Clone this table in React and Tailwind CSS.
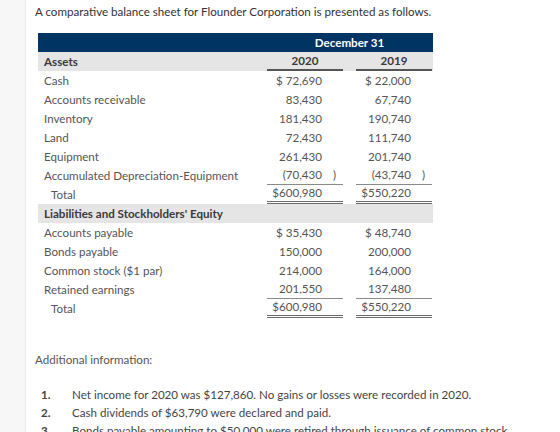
import React from "react";

const assets = [
  { label: "Cash", a: "$ 72,690", b: "$ 22,000" },
  { label: "Accounts receivable", a: "83,430", b: "67,740" },
  { label: "Inventory", a: "181,430", b: "190,740" },
  { label: "Land", a: "72,430", b: "111,740" },
  { label: "Equipment", a: "261,430", b: "201,740" },
  { label: "Accumulated Depreciation-Equipment", a: "(70,430", b: "(43,740", paren: true, rule: true },
];

const liabilities = [
  { label: "Accounts payable", a: "$ 35,430", b: "$ 48,740" },
  { label: "Bonds payable", a: "150,000", b: "200,000" },
  { label: "Common stock ($1 par)", a: "214,000", b: "164,000" },
  { label: "Retained earnings", a: "201,550", b: "137,480", rule: true },
];

function Num({ value, paren, rule, total }) {
  return (
    <div
      className={
        "relative flex h-full w-[76px] items-center justify-end pr-[7px] " +
        (rule ? "border-b border-[#8a8a8a] " : "") +
        (total ? "border-b-[3px] border-double border-[#6a6a6a]" : "")
      }
    >
      <span>{value}</span>
      <span className="w-[14px] text-right">{paren ? ")" : ""}</span>
    </div>
  );
}

function Row({ label, a, b, paren, rule, total, indent }) {
  return (
    <div className="flex h-[19px] items-center">
      <div className={"w-[229px] " + (indent ? "pl-[13px]" : "pl-[6px]")}>{label}</div>
      <Num value={a} paren={paren} rule={rule} total={total} />
      <div className="w-[13px]" />
      <Num value={b} paren={paren} rule={rule} total={total} />
    </div>
  );
}

export default function App() {
  return (
    <div
      className="flex min-h-[432px] w-[560px] bg-white text-[11.6px] text-[#555]"
      style={{ fontFamily: "Lato, 'Open Sans', sans-serif" }}
    >
      <div className="w-[26px] shrink-0 border-r border-[#ececec] bg-[#f7f7f7]" />
      <div className="flex-1 pl-[9px] pt-[3px]">
        <p className="leading-[17px] text-[#333]">
          A comparative balance sheet for Flounder Corporation is presented as follows.
        </p>

        <div className="ml-[3px] mt-[13px] w-[395px]">
          <div className="flex h-[19px] items-center bg-[#003463] font-bold text-white">
            <div className="w-[229px]" />
            <div className="w-[165px] text-center">December 31</div>
          </div>
          <div className="flex h-[19px] items-center bg-[#e5e5e5] font-bold text-[#3a3a3a]">
            <div className="w-[229px] pl-[6px]">Assets</div>
            <div className="flex h-full w-[76px] items-center justify-center border-b-2 border-[#555]">2020</div>
            <div className="w-[13px]" />
            <div className="flex h-full w-[76px] items-center justify-center border-b-2 border-[#555]">2019</div>
          </div>
          {assets.map((r) => (
            <Row key={r.label} {...r} />
          ))}
          <Row label="Total" a="$600,980" b="$550,220" total indent />
          <div className="flex h-[19px] items-center bg-[#e5e5e5] font-bold text-[#3a3a3a]">
            <div className="pl-[6px]">Liabilities and Stockholders' Equity</div>
          </div>
          {liabilities.map((r) => (
            <Row key={r.label} {...r} />
          ))}
          <Row label="Total" a="$600,980" b="$550,220" total indent />
        </div>

        <p className="mt-[33px] leading-[17px]">Additional information:</p>

        <ol className="mt-[18px] text-[#444]">
          <li className="flex h-[18px] items-center">
            <span className="w-[37px] pl-[6px] font-bold">1.</span>
            <span>Net income for 2020 was $127,860. No gains or losses were recorded in 2020.</span>
          </li>
          <li className="flex h-[18px] items-center">
            <span className="w-[37px] pl-[6px] font-bold">2.</span>
            <span>Cash dividends of $63,790 were declared and paid.</span>
          </li>
          <li className="flex h-[18px] items-center">
            <span className="w-[37px] pl-[6px] font-bold">3.</span>
            <span>Bonds payable amounting to $50,000 were retired through issuance of common stock.</span>
          </li>
        </ol>
      </div>
    </div>
  );
}
